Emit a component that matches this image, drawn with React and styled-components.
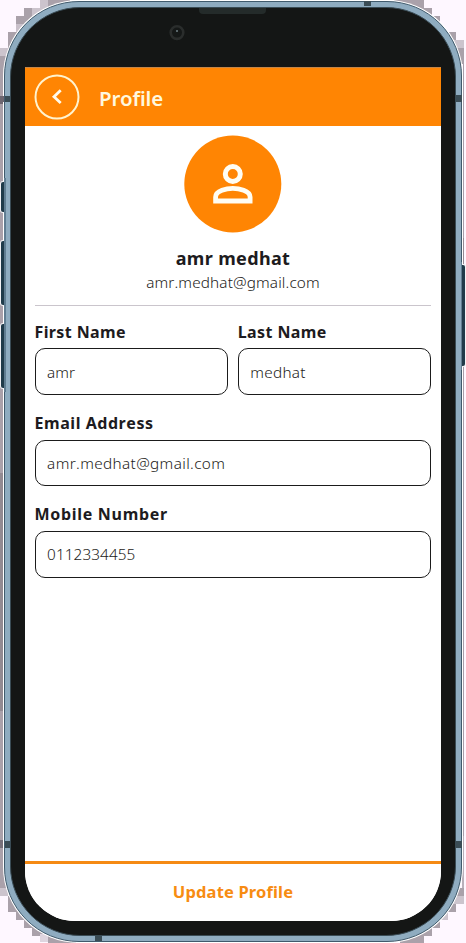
import React from "react";
import styled, { createGlobalStyle } from "styled-components";

const ORANGE = "#ff8503";
const INK = "#1d1b20";

const GlobalStyle = createGlobalStyle`
  * { box-sizing: border-box; }
  body { margin: 0; background: #fef7ff; font-family: "Noto Sans", "Open Sans", sans-serif; font-kerning: none; }
`;

const Stage = styled.div`
  position: relative;
  width: 466px;
  height: 943px;
  padding: 1px 4px 1px;
  overflow: hidden;
  background: #fef7ff;
`;

const Shadow = styled.svg`
  position: absolute;
  inset: 0;
`;

const Device = styled.div`
  position: relative;
  width: 458px;
  height: 941px;
  border-radius: 75px;
  border: 1px solid #405a6c;
  background: #8facc0;
  box-shadow: 0 0 0 1px #fff;
  padding: 5px;
`;

const Bezel = styled.div`
  height: 929px;
  border-radius: 70px;
  background: #141615;
  border: 1px solid #3a4c55;
  padding: 59px 14px 14px;
`;

const Hardware = styled.div`
  position: absolute;
  left: ${(p) => p.$x}px;
  top: ${(p) => p.$y}px;
  width: ${(p) => p.$w}px;
  height: ${(p) => p.$h}px;
  background: ${(p) => p.$color};
  border-radius: ${(p) => p.$radius || "0"};
  box-shadow: ${(p) => (p.$outlined ? "0 0 0 1px #f3f2f5" : "none")};
`;

const Camera = styled.svg`
  position: absolute;
  left: 169px;
  top: 25px;
`;

const Screen = styled.main`
  display: flex;
  flex-direction: column;
  width: 416px;
  height: 854px;
  overflow: hidden;
  border-radius: 1px 1px 50px 50px;
  background: #fff;
`;

const Header = styled.header`
  display: flex;
  align-items: center;
  height: 59px;
  flex: none;
  padding-left: 9px;
  gap: 19px;
  background: ${ORANGE};
  border-top: 1px solid #c58647;
`;

const BackButton = styled.button`
  display: grid;
  place-items: center;
  width: 46px;
  height: 46px;
  padding: 0;
  border: 0;
  background: none;
`;

const Title = styled.h1`
  margin: 1px 0 0;
  font-size: 20.5px;
  line-height: 28px;
  font-weight: 600;
  letter-spacing: ${(p) => p.$spacing}px;
  color: #fff8df;
`;

const Content = styled.div`
  display: flex;
  flex-direction: column;
  flex: 1;
  padding: 9px 10px 0;
`;

const Identity = styled.section`
  display: flex;
  flex-direction: column;
  align-items: center;
  height: 171px;
  border-bottom: 1px solid #cac5cc;
`;

const Name = styled.h2`
  margin: 12px 0 0;
  font-size: 18px;
  line-height: 26px;
  font-weight: 700;
  letter-spacing: ${(p) => p.$spacing}px;
  color: ${INK};
`;

const Email = styled.p`
  margin: 0;
  font-size: 15.3px;
  line-height: 22px;
  font-weight: 350;
  letter-spacing: ${(p) => p.$spacing}px;
  color: ${INK};
`;

const Form = styled.form`
  display: grid;
  grid-template-columns: 1fr 1fr;
  column-gap: 10px;
  row-gap: 18px;
  padding-top: 16px;
  margin-left: -0.5px;
`;

const Field = styled.label`
  display: flex;
  flex-direction: column;
  gap: 4.4px;
  grid-column: ${(p) => (p.$wide ? "1 / -1" : "auto")};
`;

const FieldLabel = styled.span`
  height: 22px;
  font-size: 16px;
  line-height: 21px;
  font-weight: 700;
  letter-spacing: ${(p) => p.$spacing}px;
  white-space: nowrap;
  color: ${INK};
`;

const FieldBox = styled.span`
  display: flex;
  align-items: center;
  height: 46.8px;
  padding: 0 11.6px 0.5px;
  border: 1px solid #1b1b1b;
  border-radius: 10px;
  font-size: 15.3px;
  font-weight: 350;
  letter-spacing: ${(p) => p.$spacing}px;
  color: ${INK};
`;

const UpdateButton = styled.button`
  height: 60px;
  flex: none;
  padding: 0 0 3px;
  border: 0;
  border-top: 3px solid #f58a14;
  background: #fff;
  color: #f78c12;
  font-family: inherit;
  font-size: 16.5px;
  font-weight: 700;
  letter-spacing: ${(p) => p.$spacing}px;
`;

const fields = [
  { label: "First Name", labelSpacing: 0.38, value: "amr", spacing: 0 },
  { label: "Last Name", labelSpacing: 0.4, value: "medhat", spacing: 0.25 },
  { label: "Email Address", labelSpacing: 0.55, value: "amr.medhat@gmail.com", spacing: 0.36, wide: true },
  { label: "Mobile Number", labelSpacing: 0.7, value: "0112334455", spacing: 0.1, wide: true },
];

const steps = [
  [0, 48, 12, 8, "#ccc4cd"], [0, 56, 12, 120, "#aaa1aa"],
  [8, 32, 16, 24, "#aaa1aa"], [16, 16, 16, 16, "#aaa1aa"], [16, 24, 16, 8, "#c9c0ca"],
  [24, 8, 24, 16, "#aaa1aa"], [32, 8, 8, 8, "#ccc4cd"], [40, 0, 30, 12, "#ccc4cd"],
  [48, 0, 22, 8, "#aaa1aa"], [0, 96, 4, 8, "#6d6670"],
  [0, 176, 4, 300, "#aaa1aa"], [0, 473, 4, 238, "#928a92"],
  [0, 711, 4, 160, "#aaa1aa"], [0, 840, 4, 8, "#77707a"],
  [0, 871, 8, 25, "#aaa1aa"], [0, 888, 8, 8, "#ccc4cd"],
  [8, 896, 12, 16, "#aaa1aa"], [16, 912, 16, 8, "#aaa1aa"],
  [24, 920, 16, 8, "#aaa1aa"], [32, 928, 16, 8, "#aaa1aa"],
  [40, 934, 8, 8, "#ded5df"], [48, 934, 28, 9, "#aaa1aa"],
  [394, 0, 30, 8, "#aaa1aa"], [416, 8, 16, 8, "#aaa1aa"],
  [424, 16, 16, 8, "#aaa1aa"], [432, 24, 16, 8, "#ccc4cd"],
  [440, 24, 16, 8, "#fef7ff"], [436, 32, 20, 8, "#aaa1aa"],
  [448, 40, 8, 8, "#ccc4cd"], [456, 40, 8, 8, "#ccc4cd"],
  [456, 48, 8, 16, "#aaa1aa"], [463, 64, 1, 174, "#a89eaa"],
  [462, 238, 2, 26, "#938a93"], [462, 366, 2, 470, "#a89eaa"],
  [462, 836, 2, 60, "#b9b0ba"], [456, 888, 8, 8, "#aaa1aa"],
  [448, 896, 16, 8, "#ccc4cd"], [444, 904, 12, 8, "#aaa1aa"],
  [436, 912, 12, 8, "#ccc4cd"], [428, 920, 12, 8, "#aaa1aa"],
  [416, 928, 16, 8, "#aaa1aa"], [400, 936, 24, 7, "#aaa1aa"],
  [117, 0, 234, 1, "#5f7b8c"], [117, 942, 234, 1, "#8c8390"],
];

const details = [
  { x: 0, y: 96, w: 4, h: 6, color: "#6d6670" },
  { x: 5, y: 96, w: 5, h: 6, color: "#3a4c55" },
  { x: 5, y: 841, w: 5, h: 7, color: "#3a4c55" },
  { x: 456, y: 95, w: 6, h: 7, color: "#3a4c55" },
  { x: 456, y: 841, w: 6, h: 7, color: "#3a4c55" },
  { x: 364, y: 1, w: 7, h: 5, color: "#3a4c55" },
  { x: 95, y: 936, w: 7, h: 5, color: "#3a4c55" },
  { x: 199, y: 8, w: 67, h: 6, color: "#242b2a", radius: "0 0 4px 4px" },
  { x: 1, y: 182, w: 4, h: 30, color: "#203b4a", radius: "2px 0 0 2px", outlined: true },
  { x: 1, y: 241, w: 4, h: 64, color: "#203b4a", radius: "2px 0 0 2px", outlined: true },
  { x: 1, y: 324, w: 4, h: 64, color: "#203b4a", radius: "2px 0 0 2px", outlined: true },
  { x: 462, y: 265, w: 3, h: 101, color: "#203b4a", radius: "0 2px 2px 0", outlined: true },
  { x: 4, y: 178, w: 2, h: 214, color: "#607d91" },
  { x: 461, y: 262, w: 1, h: 108, color: "#607d91" },
];

function PersonIcon() {
  return (
    <svg width="98" height="98" viewBox="0 0 98 98" fill="none">
      <circle cx="48.8" cy="49" r="48.5" fill={ORANGE} />
      <circle cx="48.8" cy="39" r="7.5" stroke="#fffdf3" strokeWidth="5" />
      <path d="M31.6 66V62C31.6 55.5 43 53.3 48.8 53.3S66.1 55.5 66.1 62V66Z" stroke="#fffdf3" strokeWidth="4.8" />
    </svg>
  );
}

export default function App() {
  return (
    <>
      <GlobalStyle />
      <Stage>
        <Shadow width="466" height="943" shapeRendering="crispEdges">
          {steps.map(([x, y, w, h, c], i) => (
            <rect key={i} x={x} y={y} width={w} height={h} fill={c} />
          ))}
        </Shadow>
        <Device>
          <Bezel>
            <Screen>
              <Header>
                <BackButton type="button" aria-label="Back">
                  <svg width="46" height="46" viewBox="0 0 46 46" fill="none" stroke="#fff3cf">
                    <circle cx="23" cy="23" r="21.5" strokeWidth="2" />
                    <path d="M26.7 16.3L20 22.7L26.7 29.1" stroke="#fffbed" strokeWidth="2.8" />
                  </svg>
                </BackButton>
                <Title $spacing={-0.2}>Profile</Title>
              </Header>
              <Content>
                <Identity>
                  <PersonIcon />
                  <Name $spacing={0.35}>amr medhat</Name>
                  <Email $spacing={0.14}>amr.medhat@gmail.com</Email>
                </Identity>
                <Form>
                  {fields.map((f) => (
                    <Field key={f.label} $wide={f.wide}>
                      <FieldLabel $spacing={f.labelSpacing}>{f.label}</FieldLabel>
                      <FieldBox $spacing={f.spacing}>{f.value}</FieldBox>
                    </Field>
                  ))}
                </Form>
              </Content>
              <UpdateButton type="button" $spacing={0.15}>Update Profile</UpdateButton>
            </Screen>
          </Bezel>
        </Device>
        {details.map((d, i) => (
          <Hardware key={i} $x={d.x} $y={d.y} $w={d.w} $h={d.h} $color={d.color} $radius={d.radius} $outlined={d.outlined} />
        ))}
        <Camera width="16" height="16" viewBox="0 0 16 16">
          <circle cx="8" cy="7.6" r="6.3" fill="#151817" stroke="#2a2d2c" strokeWidth="2.6" />
          <circle cx="8" cy="6" r="1" fill="#718087" />
        </Camera>
      </Stage>
    </>
  );
}
